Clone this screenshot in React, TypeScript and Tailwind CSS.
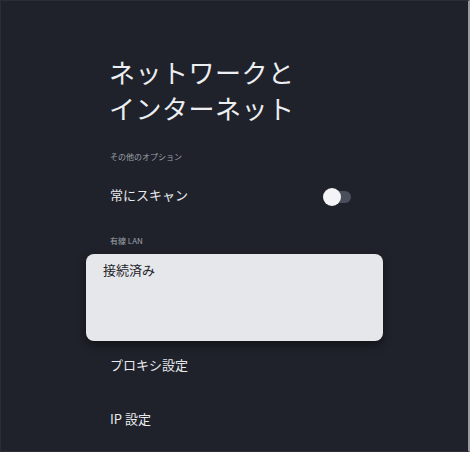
import React from "react";

export default function App() {
  return (
    <div
      className="w-[470px] h-[452px] bg-[#1f222a] border-r-2 border-r-[#9b9b9b] border-t border-l border-b border-[#2a2d35] overflow-hidden"
      style={{ fontFamily: '"Noto Sans CJK JP", "Noto Sans", sans-serif' }}
    >
      <div className="flex flex-col pt-[53px]">
        <div className="pl-[108px] text-[26px] leading-[36px] tracking-[0.5px] text-[#eceef1] font-normal">
          <div>ネットワークと</div>
          <div>インターネット</div>
        </div>
        <div className="mt-[23px] h-[16px] pl-[109px] flex items-center text-[8px] text-[#9ea3ab]">
          その他のオプション
        </div>
        <div className="mt-[10px] h-[40px] pl-[109px] pr-[117px] flex items-center justify-between text-[13px] text-[#e8eaed]">
          <span>常にスキャン</span>
          <div className="relative w-[28px] h-[18px] mt-[3px]">
            <div className="absolute left-[10px] top-[3px] w-[18px] h-[12px] rounded-full bg-[#4a4f5b]" />
            <div className="absolute left-0 top-0 w-[18px] h-[18px] rounded-full bg-[#f4f4f6]" />
          </div>
        </div>
        <div className="mt-[18px] h-[16px] pl-[109px] flex items-center text-[8px] text-[#9ea3ab]">
          有線 LAN
        </div>
        <div className="mt-[5px] ml-[85px] w-[297px] h-[87px] rounded-[8px] bg-[#e6e7eb] shadow-[0_4px_10px_rgba(0,0,0,0.45)] pl-[17px] pt-[6px]">
          <div className="text-[13px] leading-[20px] text-[#222429]">接続済み</div>
        </div>
        <div className="mt-[4px] h-[40px] pl-[109px] flex items-center text-[13px] text-[#e8eaed]">
          プロキシ設定
        </div>
        <div className="mt-[14px] h-[40px] pl-[109px] flex items-center text-[13px] text-[#e8eaed]">
          IP 設定
        </div>
      </div>
    </div>
  );
}
